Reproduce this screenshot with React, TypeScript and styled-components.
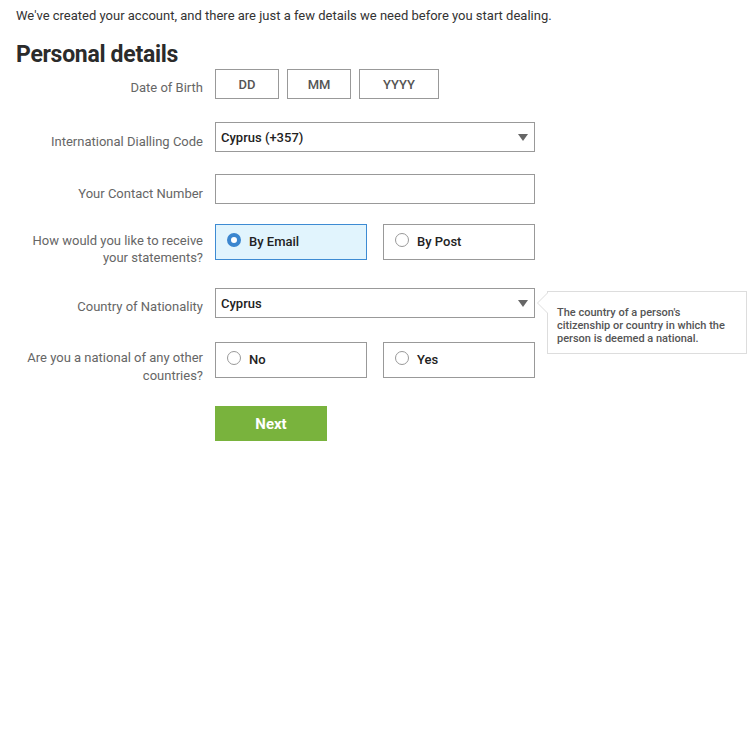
import React from "react";
import styled, { createGlobalStyle } from "styled-components";

const Global = createGlobalStyle`
  html, body { margin: 0; padding: 0; background: #fff; }
  body { font-family: Roboto, "Liberation Sans", Arial, sans-serif; color: #333; }
  * { box-sizing: border-box; }
`;

const Page = styled.div`
  padding: 7px 16px 0 16px;
`;

const Intro = styled.p`
  margin: 0;
  font-size: 13px;
  line-height: 18px;
  color: #333;
`;

const Heading = styled.h1`
  margin: 16px 0 0 0;
  font-size: 23px;
  line-height: 28px;
  font-weight: 700;
  color: #2b2b2b;
  letter-spacing: -0.3px;
`;

const Row = styled.div<{ $mt: number }>`
  display: grid;
  grid-template-columns: 187px 320px;
  column-gap: 12px;
  margin-top: ${(p) => p.$mt}px;
  align-items: start;
`;

const Label = styled.label<{ $pt: number; $lh?: number }>`
  text-align: right;
  font-size: 13px;
  line-height: ${(p) => p.$lh ?? 18}px;
  color: #666;
  padding-top: ${(p) => p.$pt}px;
  margin-bottom: -20px;
`;

const Field = styled.div`
  position: relative;
`;

const DateGroup = styled.div`
  display: flex;
  gap: 8px;
`;

const DateBox = styled.div<{ $w: number }>`
  width: ${(p) => p.$w}px;
  height: 30px;
  border: 1px solid #999;
  display: flex;
  align-items: center;
  justify-content: center;
  font-size: 13px;
  font-weight: 500;
  color: #555;
`;

const SelectBox = styled.div`
  width: 320px;
  height: 30px;
  border: 1px solid #999;
  display: flex;
  align-items: center;
  justify-content: space-between;
  padding: 0 6px 0 5px;
  font-size: 13px;
  font-weight: 500;
  color: #222;
`;

const Caret = styled.span`
  width: 0;
  height: 0;
  border-left: 5px solid transparent;
  border-right: 5px solid transparent;
  border-top: 7px solid #666;
`;

const TextInput = styled.div`
  width: 320px;
  height: 30px;
  border: 1px solid #999;
`;

const RadioGroup = styled.div`
  display: flex;
  gap: 16px;
`;

const RadioBox = styled.div<{ $on?: boolean }>`
  width: 152px;
  height: 36px;
  border: 1px solid ${(p) => (p.$on ? "#3d8bd3" : "#999")};
  background: ${(p) => (p.$on ? "#e1f4fd" : "#fff")};
  display: flex;
  align-items: center;
  padding: 0 0 1px 11px;
  gap: 8px;
  font-size: 13px;
  font-weight: 500;
  color: #222;
`;

const Circle = styled.span<{ $on?: boolean }>`
  width: 14px;
  height: 14px;
  border-radius: 50%;
  flex: none;
  background: #fff;
  border: ${(p) => (p.$on ? "4px solid #3b86cf" : "1px solid #999")};
  margin-top: -4px;
`;

const Tooltip = styled.div`
  position: absolute;
  left: 332px;
  top: 3px;
  width: 200px;
  border: 1px solid #ddd;
  background: #fff;
  padding: 14px 10px 8px 9px;
  font-size: 11px;
  line-height: 13px;
  color: #555;
  font-weight: 500;
  &::before {
    content: "";
    position: absolute;
    left: -11px;
    top: 0px;
    width: 0;
    height: 0;
    border-top: 11px solid transparent;
    border-bottom: 11px solid transparent;
    border-right: 11px solid #ddd;
  }
  &::after {
    content: "";
    position: absolute;
    left: -10px;
    top: 0px;
    width: 0;
    height: 0;
    border-top: 11px solid transparent;
    border-bottom: 11px solid transparent;
    border-right: 11px solid #fff;
  }
`;

const Button = styled.button`
  width: 112px;
  height: 35px;
  border: none;
  background: #79b33d;
  color: #fff;
  font-family: inherit;
  font-size: 15px;
  font-weight: 700;
  cursor: pointer;
`;

export default function App() {
  return (
    <>
      <Global />
      <Page>
        <Intro>
          We've created your account, and there are just a few details we need before you start dealing.
        </Intro>
        <Heading>Personal details</Heading>

        <Row $mt={0}>
          <Label $pt={10}>Date of Birth</Label>
          <DateGroup>
            <DateBox $w={64}>DD</DateBox>
            <DateBox $w={64}>MM</DateBox>
            <DateBox $w={80}>YYYY</DateBox>
          </DateGroup>
        </Row>

        <Row $mt={23}>
          <Label $pt={11}>International Dialling Code</Label>
          <SelectBox>
            <span>Cyprus (+357)</span>
            <Caret />
          </SelectBox>
        </Row>

        <Row $mt={22}>
          <Label $pt={11}>Your Contact Number</Label>
          <TextInput />
        </Row>

        <Row $mt={20}>
          <Label $pt={8} $lh={17}>How would you like to receive your statements?</Label>
          <RadioGroup>
            <RadioBox $on>
              <Circle $on />
              By Email
            </RadioBox>
            <RadioBox>
              <Circle />
              By Post
            </RadioBox>
          </RadioGroup>
        </Row>

        <Row $mt={28}>
          <Label $pt={10}>Country of Nationality</Label>
          <Field>
            <SelectBox>
              <span>Cyprus</span>
              <Caret />
            </SelectBox>
            <Tooltip>
              The country of a person's citizenship or country in which the person is deemed a national.
            </Tooltip>
          </Field>
        </Row>

        <Row $mt={24}>
          <Label $pt={7}>Are you a national of any other countries?</Label>
          <RadioGroup>
            <RadioBox>
              <Circle />
              No
            </RadioBox>
            <RadioBox>
              <Circle />
              Yes
            </RadioBox>
          </RadioGroup>
        </Row>

        <Row $mt={28}>
          <span />
          <div>
            <Button>Next</Button>
          </div>
        </Row>
      </Page>
    </>
  );
}
